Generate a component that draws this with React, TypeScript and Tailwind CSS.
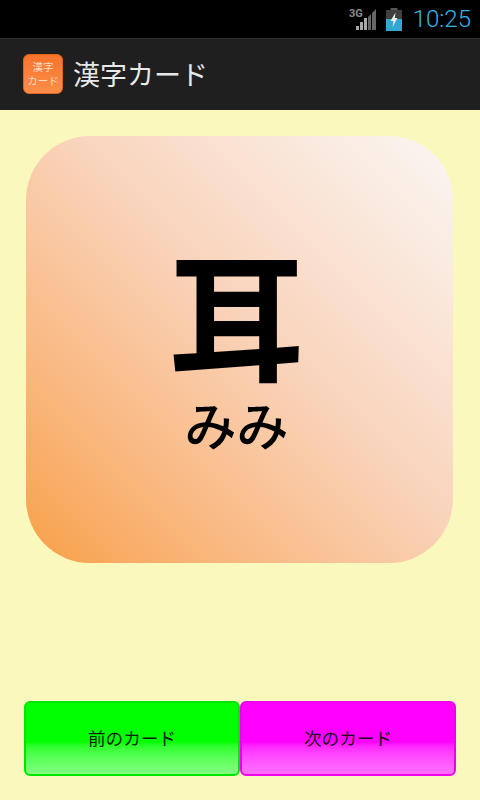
export default function App() {
  const cjk = "font-['Noto_Sans_CJK_JP','Noto_Sans_CJK_SC',sans-serif]";
  return (
    <div className={`w-[480px] h-[800px] flex flex-col overflow-hidden bg-[#fbf8be] ${cjk}`}>
      <div className="h-[38px] shrink-0 bg-black flex items-center justify-end">
        <svg width="30" height="26" viewBox="0 0 30 26" className="mr-[10px] mb-[2px]">
          <text x="3" y="12" fontSize="11" fontWeight="700" fill="#8a8a8a" fontFamily="Roboto, sans-serif">3G</text>
          <path d="M10 25h3v-4h-3zM14 25h3v-8h-3zM18 25h3v-12h-3z" fill="#a8a8a8" />
          <path d="M22 25h3V9l-3 3zM26 25h4V4l-4 4z" fill="#666666" />
        </svg>
        <svg width="16" height="23" viewBox="0 0 16 23" className="mr-[11px]">
          <rect x="4.500" y="0" width="7" height="3" fill="#555555" />
          <rect x="0" y="2" width="16" height="21" fill="#404040" />
          <rect x="0" y="11" width="16" height="12" fill="#33a6d4" />
          <path d="M9.500 4.500L4.500 13h3l-1 6 5-9H8.800z" fill="#eeeeee" />
        </svg>
        <span className="font-['Roboto',sans-serif] font-light text-[24px] leading-none text-[#33b5e5] mr-[9px]">10:25</span>
      </div>

      <div className="h-[72px] shrink-0 bg-[#1f1f20] border-t border-[#303030] flex items-center pl-[23px]">
        <div className="w-[40px] h-[40px] mb-[1px] rounded-[6px] bg-gradient-to-b from-[#f8742a] to-[#fb8d4a] border border-[#e0651c] flex flex-col items-center justify-center text-[#fbdcc4] text-[10.500px] leading-[14px]">
          <span>漢字</span>
          <span>カード</span>
        </div>
        <span className="ml-[10px] mb-[3px] text-[27px] leading-none text-[#e8e8e8]">漢字カード</span>
      </div>

      <div className="flex-1 flex flex-col items-center">
        <div className="mt-[26px] ml-[-1px] pr-[6px] w-[427px] h-[427px] rounded-[64px] bg-gradient-to-tr from-[#f8a045] via-[#f9d4bc] via-55% to-[#faf7f4] flex flex-col items-center text-black">
          <span className="mt-[111px] text-[136px] leading-[130px] font-bold">耳</span>
          <span className="mt-[22px] text-[52px] leading-[50px] font-medium">みみ</span>
        </div>

        <div className="mt-[138px] flex">
          <button className="w-[216px] h-[75px] rounded-[6px] border-2 border-[#00e600] bg-gradient-to-b from-[#00ff00] from-55% to-[#80ff80] text-[17.600px] text-[#0c200c]">
            前のカード
          </button>
          <button className="w-[216px] h-[75px] rounded-[6px] border-2 border-[#f000f0] bg-gradient-to-b from-[#ff00ff] from-55% to-[#ff70ff] text-[17.600px] text-[#200c20]">
            次のカード
          </button>
        </div>
      </div>
    </div>
  );
}
